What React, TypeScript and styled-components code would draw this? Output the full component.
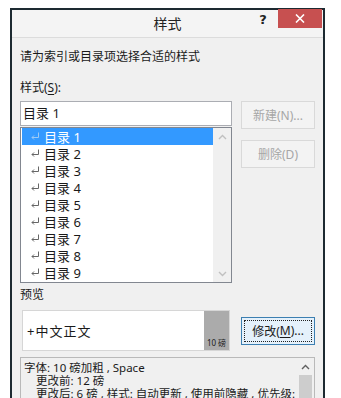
import React from "react";
import styled, { createGlobalStyle } from "styled-components";

const Global = createGlobalStyle`
  html, body { margin: 0; padding: 0; background: #ffffff; overflow: hidden; }
  body { font-family: "Noto Sans", "Noto Sans CJK SC", sans-serif; }
`;

const FONT = `"Noto Sans", "Noto Sans CJK SC", sans-serif`;

const Page = styled.div`
  width: 341px;
  height: 398px;
  padding: 8px 0 0 10px;
  box-sizing: border-box;
  overflow: hidden;
`;

const Window = styled.div`
  width: 315px;
  height: 420px;
  box-sizing: border-box;
  border: 2px solid #1d2a31;
  background: #f0f0f0;
  display: flex;
  flex-direction: column;
  font-family: ${FONT};
  font-size: 12px;
  color: #1a1a1a;
`;

const TitleBar = styled.div`
  height: 27px;
  display: grid;
  grid-template-columns: 1fr auto 1fr;
  background: #f4f4f4;
  border-bottom: 1px solid #dcdcdc;
`;

const Title = styled.div`
  grid-column: 2;
  font-size: 14px;
  line-height: 27px;
  color: #222;
`;

const Controls = styled.div`
  grid-column: 3;
  justify-self: end;
  display: flex;
  align-items: flex-start;
  margin-right: 1px;
`;

const Help = styled.div`
  width: 20px;
  margin-right: 5px;
  font-family: "DejaVu Sans", sans-serif;
  font-weight: bold;
  font-size: 13px;
  line-height: 20px;
  text-align: center;
  color: #222;
`;

const Close = styled.div`
  width: 44px;
  height: 19px;
  margin-top: -1px;
  background: #c75050;
  display: flex;
  align-items: center;
  justify-content: center;
`;

const Body = styled.div`
  padding: 0 8px;
  display: flex;
  flex-direction: column;
`;

const Text = styled.div<{ $mt: number }>`
  margin-top: ${(p) => p.$mt}px;
  line-height: 16px;
  font-size: 12px;
`;

const U = styled.span`
  text-decoration: underline;
  text-underline-offset: 2px;
`;

const TwoCol = styled.div<{ $mt: number; $align?: string }>`
  margin-top: ${(p) => p.$mt}px;
  display: grid;
  grid-template-columns: 212px 74px;
  column-gap: 9px;
  align-items: ${(p) => p.$align || "start"};
`;

const LeftStack = styled.div`
  display: flex;
  flex-direction: column;
`;

const Input = styled.div`
  height: 25px;
  box-sizing: border-box;
  border: 1px solid #abadb3;
  background: #fff;
  padding-left: 2px;
  line-height: 23px;
  font-size: 13px;
`;

const List = styled.div`
  margin-top: 1px;
  height: 156px;
  box-sizing: border-box;
  border: 1px solid #828790;
  background: #fff;
  display: flex;
  padding-left: 1px;
`;

const Rows = styled.div`
  flex: 1;
  display: flex;
  flex-direction: column;
`;

const Row = styled.div<{ $sel?: boolean }>`
  height: 17px;
  display: flex;
  align-items: center;
  padding-left: 8px;
  gap: 4px;
  font-size: 13px;
  background: ${(p) => (p.$sel ? "#3399ff" : "transparent")};
  color: ${(p) => (p.$sel ? "#ffffff" : "#1a1a1a")};
`;

const VScroll = styled.div<{ $w: number }>`
  width: ${(p) => p.$w}px;
  display: flex;
  flex-direction: column;
  align-items: center;
  background: #f0f0f0;
`;

const Arrow = styled.div`
  height: 17px;
  display: flex;
  align-items: center;
  justify-content: center;
`;

const Spacer = styled.div`
  flex: 1;
`;

const ButtonCol = styled.div`
  display: flex;
  flex-direction: column;
  gap: 11px;
`;

const Button = styled.div<{ $disabled?: boolean; $focus?: boolean }>`
  height: 28px;
  box-sizing: border-box;
  display: flex;
  align-items: center;
  justify-content: center;
  font-size: 12px;
  border: 1px solid ${(p) => (p.$focus ? "#3c7fb1" : "#d9d9d9")};
  background: ${(p) => (p.$focus ? "#e5f1fb" : "#f3f3f3")};
  color: ${(p) => (p.$disabled ? "#a6a6a6" : "#1a1a1a")};
  position: relative;
`;

const FocusRing = styled.div`
  position: absolute;
  inset: 2px;
  border: 1px dotted #222;
`;

const Preview = styled.div`
  margin: 0 2px;
  height: 41px;
  box-sizing: border-box;
  border: 1px solid #d6d6d6;
  background: #fff;
  display: flex;
`;

const PreviewText = styled.div`
  flex: 1;
  padding-left: 4px;
  display: flex;
  align-items: center;
  font-size: 13px;
  letter-spacing: 1px;
`;

const SizeBlock = styled.div`
  width: 25px;
  background: #ababab;
  display: flex;
  align-items: flex-end;
  justify-content: center;
  font-size: 8px;
  line-height: 12px;
  padding-bottom: 1px;
  color: #1a1a1a;
`;

const Desc = styled.div`
  margin-top: 6px;
  height: 60px;
  box-sizing: border-box;
  border: 1px solid #b9b9b9;
  background: #f0f0f0;
  display: flex;
`;

const DescText = styled.div`
  flex: 1;
  padding: 3px 0 0 3px;
  font-size: 11.5px;
  line-height: 13px;
  white-space: nowrap;
  overflow: hidden;
`;

const Line = styled.div<{ $indent?: boolean }>`
  height: 13px;
  padding-left: ${(p) => (p.$indent ? 12 : 0)}px;
`;

const Thumb = styled.div`
  width: 13px;
  flex: 1;
  background: #cdcdcd;
`;

const ReturnMark = ({ sel }: { sel?: boolean }) => (
  <svg width="10" height="9" viewBox="0 0 10 9">
    <path
      d="M8.5 0.5 V5.5 H2 M4 3.5 L2 5.5 L4 7.5"
      fill="none"
      stroke={sel ? "#9cc9f5" : "#666"}
      strokeWidth="1"
    />
  </svg>
);

const Caret = ({ up, color = "#a0a0a0" }: { up?: boolean; color?: string }) => (
  <svg width="9" height="6" viewBox="0 0 9 6">
    <path
      d={up ? "M1 5 L4.5 1.5 L8 5" : "M1 1 L4.5 4.5 L8 1"}
      fill="none"
      stroke={color}
      strokeWidth="1.4"
    />
  </svg>
);

const items = [1, 2, 3, 4, 5, 6, 7, 8, 9];

export default function App() {
  return (
    <Page>
      <Global />
      <Window>
        <TitleBar>
          <Title>样式</Title>
          <Controls>
            <Help>?</Help>
            <Close>
              <svg width="10" height="9" viewBox="0 0 10 9">
                <path d="M1 0.5 L9 8.5 M9 0.5 L1 8.5" stroke="#fff" strokeWidth="1.6" />
              </svg>
            </Close>
          </Controls>
        </TitleBar>
        <Body>
          <Text $mt={11}>请为索引或目录项选择合适的样式</Text>
          <Text $mt={15}>
            样式(<U>S</U>):
          </Text>
          <TwoCol $mt={5}>
            <LeftStack>
              <Input>目录 1</Input>
              <List>
                <Rows>
                  {items.map((n) => (
                    <Row key={n} $sel={n === 1}>
                      <ReturnMark sel={n === 1} />
                      <span>目录 {n}</span>
                    </Row>
                  ))}
                </Rows>
                <VScroll $w={18}>
                  <Arrow>
                    <Caret up color="#c0c0c0" />
                  </Arrow>
                  <Spacer />
                  <Arrow>
                    <Caret color="#c0c0c0" />
                  </Arrow>
                </VScroll>
              </List>
              <Text $mt={4}>预览</Text>
            </LeftStack>
            <ButtonCol>
              <Button $disabled>新建(N)...</Button>
              <Button $disabled>删除(D)</Button>
            </ButtonCol>
          </TwoCol>
          <TwoCol $mt={7} $align="center">
            <Preview>
              <PreviewText>+中文正文</PreviewText>
              <SizeBlock>10 磅</SizeBlock>
            </Preview>
            <Button $focus>
              <FocusRing />
              修改(<U>M</U>)...
            </Button>
          </TwoCol>
          <Desc>
            <DescText>
              <Line>字体: 10 磅加粗 , Space</Line>
              <Line $indent>更改前: 12 磅</Line>
              <Line $indent>更改后: 6 磅 , 样式: 自动更新 , 使用前隐藏 , 优先级:</Line>
            </DescText>
            <VScroll $w={17}>
              <Arrow>
                <Caret up color="#606060" />
              </Arrow>
              <Thumb />
            </VScroll>
          </Desc>
        </Body>
      </Window>
    </Page>
  );
}
